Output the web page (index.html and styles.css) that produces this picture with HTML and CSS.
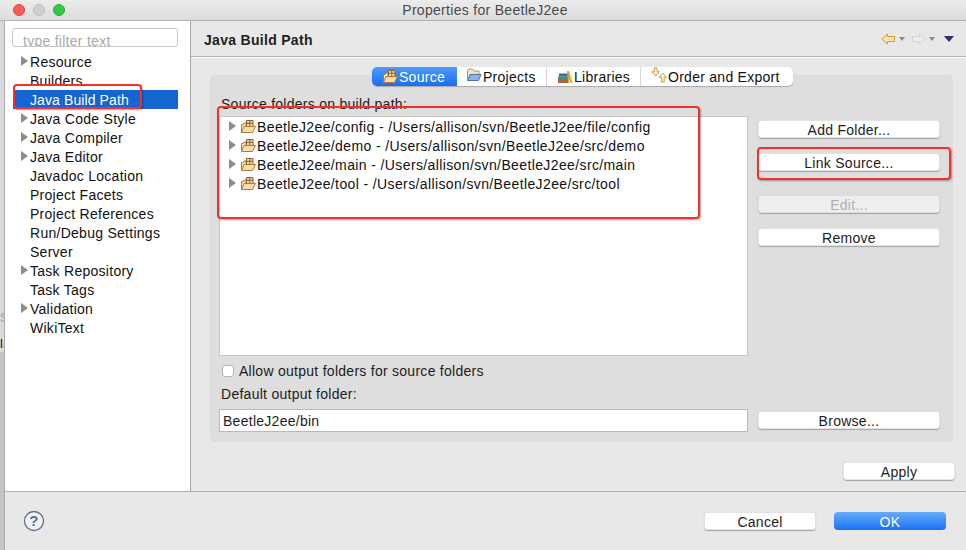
FILE: index.html
```html
<!DOCTYPE html>
<html lang="en">
<head>
<meta charset="utf-8">
<title>Properties for BeetleJ2ee</title>
<link rel="stylesheet" href="styles.css">
</head>
<body>
<svg class="defs" width="0" height="0" aria-hidden="true">
  <defs>
    <symbol id="pkg" viewBox="0 0 16 14">
      <path d="M1.500 12.500V4.500h1.500l1-1.500h2V5.500M13 5.500V6.500" fill="#f4e0b4" stroke="#b07c3c"/>
      <path d="M1.500 12.500 4 6.500h11.500l-3 6z" fill="#f7dca8" stroke="#b07c3c" stroke-linejoin="round"/>
      <path d="M6.500 6V.5h6.500V6M9.750 .5V6M6.500 3.250h6.500" fill="#f0d9ac" stroke="#8a5f30" stroke-width="1"/>
    </symbol>
  </defs>
</svg>
<div class="titlebar">
  <div class="lights">
    <span class="light light-red"></span>
    <span class="light light-grey"></span>
    <span class="light light-green"></span>
  </div>
  <div class="title">Properties for BeetleJ2ee</div>
</div>
<div class="desk">
  <div class="strip">
    <div class="strip-top"><span class="strip-ghost">So</span></div>
    <div class="strip-bottom"><span class="strip-dark">la</span></div>
  </div>
  <div class="window">
    <div class="main">
      <aside class="sidebar">
        <div class="filter">type filter text</div>
        <ul class="nav">
          <li class="nav-item has-kids">Resource</li>
          <li class="nav-item">Builders</li>
          <li class="nav-item selected">Java Build Path</li>
          <li class="nav-item has-kids">Java Code Style</li>
          <li class="nav-item has-kids">Java Compiler</li>
          <li class="nav-item has-kids">Java Editor</li>
          <li class="nav-item">Javadoc Location</li>
          <li class="nav-item">Project Facets</li>
          <li class="nav-item">Project References</li>
          <li class="nav-item">Run/Debug Settings</li>
          <li class="nav-item">Server</li>
          <li class="nav-item has-kids">Task Repository</li>
          <li class="nav-item">Task Tags</li>
          <li class="nav-item has-kids">Validation</li>
          <li class="nav-item">WikiText</li>
        </ul>
      </aside>
      <section class="content">
        <header class="content-head">
          <h1 class="content-title">Java Build Path</h1>
          <div class="head-tools">
            <svg class="nav-arrow" viewBox="0 0 15 12" width="15" height="12"><path d="M1 6 6.500 1v2.500h7v5h-7V11z" fill="#fbe6a8" stroke="#d39a35" stroke-linejoin="round"/></svg>
            <span class="caret"></span>
            <svg class="nav-arrow arrow-right" viewBox="0 0 15 12" width="15" height="12"><path d="M14 6 8.500 1v2.500h-7v5h7V11z" fill="#ececec" stroke="#d4d4d4" stroke-linejoin="round"/></svg>
            <span class="caret"></span>
            <span class="menu-caret"></span>
          </div>
        </header>
        <div class="panel">
          <div class="tabs">
            <div class="tab tab-on"><svg class="ic" width="16" height="14"><use href="#pkg"/></svg>Source</div>
            <div class="tab tab-projects">
              <svg class="ic ic-up" viewBox="0 0 16 14" width="16" height="14"><path d="M1.500 11V2.500l1-1.500h4l1.500 2h5V6" fill="#f3e6bf" stroke="#a39878"/><path d="M1.500 12.500 4 6.500h11l-2.500 6z" fill="#8fb2e0" stroke="#4a6ea8" stroke-linejoin="round"/></svg>Projects
            </div>
            <div class="tab tab-libs">
              <svg class="ic" viewBox="0 0 16 14" width="16" height="14"><path d="M1 10h10v3H1z" fill="#a8643c"/><path d="M1 6.500h10V10H1z" fill="#3f8f7a"/><path d="M2 3.500h9v3H2z" fill="#3b6d9a"/><path d="M11 13 10 1h2l3.500 12h-2l-1-4-.3 4z" fill="#d9a63f"/></svg>Libraries
            </div>
            <div class="tab tab-order">
              <svg class="ic ic-order" viewBox="0 0 17 17" width="16" height="16"><path d="M3.500 1h3v4H9L5 9.500 1 5h2.500z" fill="#fdf3cf" stroke="#c8963c" stroke-linejoin="round"/><path d="M11 16h3v-5h2.500L12.500 6.500 8.500 11H11z" fill="#fdf3cf" stroke="#c8963c" stroke-linejoin="round"/></svg>Order and Export
            </div>
          </div>
          <div class="panel-body">
            <div class="col-left">
              <div class="label label-list">Source folders on build path:</div>
              <ul class="list">
                <li class="row"><span class="twisty"></span><svg class="ic" width="16" height="14"><use href="#pkg"/></svg>BeetleJ2ee/config - /Users/allison/svn/BeetleJ2ee/file/config</li>
                <li class="row"><span class="twisty"></span><svg class="ic" width="16" height="14"><use href="#pkg"/></svg>BeetleJ2ee/demo - /Users/allison/svn/BeetleJ2ee/src/demo</li>
                <li class="row"><span class="twisty"></span><svg class="ic" width="16" height="14"><use href="#pkg"/></svg>BeetleJ2ee/main - /Users/allison/svn/BeetleJ2ee/src/main</li>
                <li class="row"><span class="twisty"></span><svg class="ic" width="16" height="14"><use href="#pkg"/></svg>BeetleJ2ee/tool - /Users/allison/svn/BeetleJ2ee/src/tool</li>
              </ul>
              <div class="check-row"><span class="checkbox"></span>Allow output folders for source folders</div>
              <div class="label label-output">Default output folder:</div>
              <div class="field">BeetleJ2ee/bin</div>
            </div>
            <div class="col-right">
              <div class="btn btn-add">Add Folder...</div>
              <div class="btn btn-link">Link Source...</div>
              <div class="btn btn-edit">Edit...</div>
              <div class="btn btn-remove">Remove</div>
              <div class="btn btn-browse">Browse...</div>
            </div>
          </div>
        </div>
        <div class="apply-row"><div class="btn btn-wide">Apply</div></div>
      </section>
    </div>
    <footer class="footer">
      <svg class="help" viewBox="0 0 22 22" width="22" height="22"><circle cx="11" cy="11" r="9.500" fill="#f2f2f4" stroke="#5c6f92" stroke-width="1.300"/><text x="11" y="16" class="help-mark">?</text></svg>
      <div class="footer-btns">
        <div class="btn btn-wide">Cancel</div>
        <div class="btn btn-wide btn-primary">OK</div>
      </div>
    </footer>
  </div>
</div>
<div class="mark mark-nav"></div>
<div class="mark mark-list"></div>
<div class="mark mark-link"></div>
</body>
</html>
```

FILE: styles.css
```css
* { box-sizing: border-box; }
html, body { margin: 0; padding: 0; }
body {
  width: 966px;
  height: 550px;
  overflow: hidden;
  position: relative;
  display: flex;
  flex-direction: column;
  font-family: "Liberation Sans", Arial, sans-serif;
  font-size: 14px;
  letter-spacing: .27px;
  color: #1c1c1c;
  background: #e8e8e8;
}
.defs { position: absolute; }
ul { list-style: none; margin: 0; padding: 0; }

.titlebar {
  height: 21px;
  flex: none;
  display: flex;
  align-items: center;
  position: relative;
  background: linear-gradient(#ececec, #dcdcdc);
  border-bottom: 1px solid #b4b4b4;
}
.lights { display: flex; gap: 8px; padding-left: 13px; }
.light { width: 12px; height: 12px; border-radius: 50%; }
.light-red { background: #fc5b57; border: 1px solid #e2463f; }
.light-grey { background: #cfcfcf; border: 1px solid #bdbdbd; }
.light-green { background: #34c84a; border: 1px solid #2aab3a; }
.title { position: absolute; left: 0; right: 0; padding-left: 4px; text-align: center; font-size: 14px; color: #4a4a4a; letter-spacing: .3px; }

.desk { flex: 1; min-height: 0; display: flex; }
.strip { width: 5px; flex: none; display: flex; flex-direction: column; overflow: hidden; border-right: 1px solid #a8a8a8; }
.strip-top { height: 314px; flex: none; background: #d9d9d9; padding-top: 289px; color: #a0a0a0; font-size: 13px; line-height: 16px; white-space: nowrap; }
.strip-bottom { flex: 1; background: #c4c4c4; color: #111; font-size: 13px; white-space: nowrap; }
.strip-dark { display: block; height: 17px; line-height: 18px; background: #dcdcdc; }

.window { flex: 1; min-width: 0; display: flex; flex-direction: column; }
.main { flex: 1; min-height: 0; display: flex; }

.sidebar { width: 186px; flex: none; background: #fff; border-right: 1px solid #a9a9a9; padding: 7px 12px 0 7px; }
.filter {
  height: 19px;
  border: 1px solid #c8c8c8;
  border-radius: 3px;
  padding-left: 10px;
  line-height: 24px;
  color: #a9a9a9;
  overflow: hidden;
}
.nav { margin-top: 6px; margin-left: 1px; }
.nav-item { height: 19px; line-height: 19px; padding-left: 17px; position: relative; color: #111; }
.has-kids::before {
  content: "";
  position: absolute;
  left: 8px;
  top: 3px;
  border-left: 7px solid #8c8c8c;
  border-top: 5px solid transparent;
  border-bottom: 5px solid transparent;
}
.selected { margin: -1px 0 1px; line-height: 21px; background: #1464d2; color: #fff; letter-spacing: .1px; }

.content { flex: 1; min-width: 0; display: flex; flex-direction: column; background: #e8e8e8; }
.content-head {
  height: 36px;
  flex: none;
  display: flex;
  align-items: center;
  justify-content: space-between;
  padding: 2px 12px 0 13px;
  border-bottom: 1px solid #b4b4b4;
  box-shadow: 0 1px 0 #f8f8f8;
}
.content-title { margin: 0; font-size: 14px; font-weight: 700; color: #222; letter-spacing: .3px; }
.head-tools { display: flex; align-items: center; margin-top: -2px; }
.caret { width: 0; height: 0; border-left: 3px solid transparent; border-right: 3px solid transparent; border-top: 4px solid #8a8a8a; margin: 1px 0 0 3px; }
.arrow-right { margin-left: 6px; }
.menu-caret { width: 0; height: 0; border-left: 5px solid transparent; border-right: 5px solid transparent; border-top: 6px solid #3c2a66; margin-left: 9px; }

.panel { margin: 18px 13px 0 19px; height: 367px; background: #dedede; border-radius: 5px; flex: none; display: flex; flex-direction: column; }
.tabs { align-self: flex-start; display: flex; height: 19px; margin: -8px 0 0 162px; background: #fff; border-radius: 5px; box-shadow: 0 1px 1px #a8a8a8; }
.tab { height: 19px; display: flex; align-items: center; border-right: 1px solid #d8d8d8; white-space: nowrap; color: #111; }
.ic { flex: none; }
.ic-up { margin-top: -3px; margin-right: 1px; }
.ic-order { margin-top: -4px; margin-right: 1px; }
.tab-on { width: 85px; padding-left: 10px; background: linear-gradient(#4d9bfb, #1a6ff0); color: #fff; border: 0; border-radius: 5px 0 0 5px; }
.tab-on .ic { margin-right: 1px; }
.tab-projects { width: 90px; padding-left: 9px; }
.tab-libs { width: 94px; padding-left: 10px; }
.tab-libs .ic { margin-right: 1px; }
.tab-order { width: 152px; padding-left: 10px; border: 0; }

.panel-body { flex: 1; min-height: 0; display: flex; gap: 10px; padding: 0 13px 10px 9px; }
.col-left { width: 529px; flex: none; display: flex; flex-direction: column; }
.label { line-height: 16px; color: #1c1c1c; }
.label-list { margin: 10px 0 4px 2px; height: 16px; }
.list { height: 240px; background: #fff; border: 1px solid #c6c6c6; flex: none; letter-spacing: .38px; }
.row { height: 19px; display: flex; align-items: center; white-space: nowrap; color: #111; padding-left: 9px; }
.row .ic { margin: 0 1px 0 4px; }
.twisty { width: 0; height: 0; border-left: 7px solid #8c8c8c; border-top: 5px solid transparent; border-bottom: 5px solid transparent; flex: none; margin-top: -2px; }
.check-row { display: flex; align-items: center; height: 16px; margin: 7px 0 0 3px; }
.checkbox { width: 12px; height: 12px; background: #fff; border: 1px solid #b4b4b4; border-radius: 3px; margin-right: 5px; flex: none; }
.label-output { margin: 7px 0 7px 2px; }
.field { height: 23px; background: #fff; border: 1px solid #b8b8b8; padding-left: 3px; line-height: 23px; flex: none; }

.col-right { width: 182px; flex: none; display: flex; flex-direction: column; padding: 34px 0 3px; }
.btn {
  height: 18px;
  flex: none;
  background: #fff;
  border-radius: 4px;
  box-shadow: inset 0 0 0 .5px #c8c8c8, 0 1px 1px #a4a4a4;
  text-align: center;
  line-height: 20px;
  color: #1c1c1c;
}
.btn-link { margin-top: 15px; }
.btn-edit { margin-top: 24px; background: #efefef; color: #b0b0b0; }
.btn-remove { margin-top: 15px; }
.btn-browse { margin-top: auto; }
.btn-wide { width: 112px; }
.btn-primary { background: linear-gradient(#66adfb, #1a70f4); color: #fff; box-shadow: none; }

.apply-row { display: flex; justify-content: flex-end; padding: 20px 11px 0 0; }

.footer { height: 59px; flex: none; display: flex; align-items: flex-start; justify-content: space-between; padding: 20px 20px 0 18px; border-top: 1px solid #b0b0b0; border-radius: 0 0 0 8px; background: #e8e8e8; }
.help { margin-top: -2px; }
.help-mark { font-family: "Liberation Sans", Arial, sans-serif; font-size: 15px; font-weight: 700; fill: #5c6f92; text-anchor: middle; }
.footer-btns { display: flex; gap: 18px; }

.mark { position: absolute; border: 2px solid #f5302a; border-radius: 4px; box-shadow: 1px 1px 2px rgba(0, 0, 0, .35); pointer-events: none; }
.mark-nav { left: 13px; top: 84px; width: 129px; height: 25px; }
.mark-list { left: 217px; top: 106px; width: 483px; height: 113px; }
.mark-link { left: 757px; top: 147px; width: 194px; height: 33px; }
```
